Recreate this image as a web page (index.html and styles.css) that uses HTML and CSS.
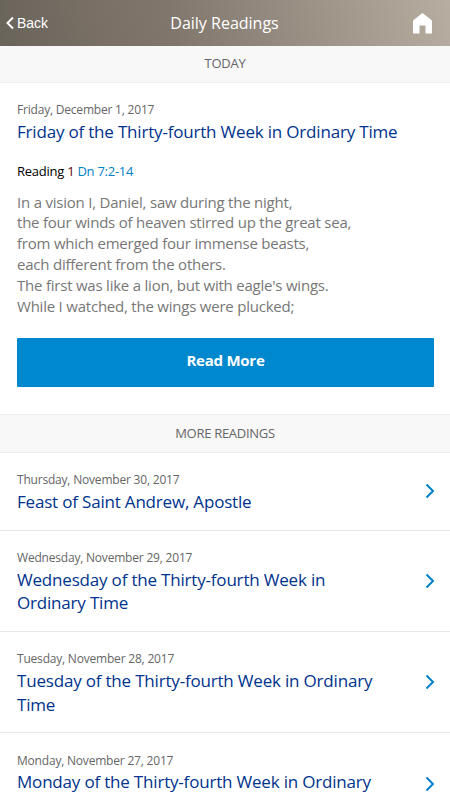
FILE: index.html
```html
<!DOCTYPE html>
<html lang="en">
<head>
<meta charset="utf-8">
<title>Daily Readings</title>
<link rel="stylesheet" href="styles.css">
</head>
<body>
<header class="bar">
  <a class="back"><svg width="8" height="14" viewBox="0 0 8 14"><path d="M7 1.5 1.5 7 7 12.5" fill="none" stroke="#fff" stroke-width="2"/></svg><span>Back</span></a>
  <h1>Daily Readings</h1>
  <a class="home"><svg width="19" height="21" viewBox="0 0 19 21"><path d="M9.5 0 0 7.5V20.5H6.5V12.5H12.5V20.5H19V7.5Z" fill="#fff"/></svg></a>
</header>
<h2 class="section">TODAY</h2>
<article class="today">
  <p class="date">Friday, December 1, 2017</p>
  <h3 class="title">Friday of the Thirty-fourth Week in Ordinary Time</h3>
  <p class="reading">Reading <span class="num">1</span> <a>Dn 7:2-14</a></p>
  <p class="verse">In a vision I, Daniel, saw during the night,<br>the four winds of heaven stirred up the great sea,<br>from which emerged four immense beasts,<br>each different from the others.<br>The first was like a lion, but with eagle's wings.<br>While I watched, the wings were plucked;</p>
  <a class="more">Read More</a>
</article>
<h2 class="section second">MORE READINGS</h2>
<ul class="list">
  <li><div><p class="date">Thursday, November 30, 2017</p><h3 class="title">Feast of Saint Andrew, Apostle</h3></div><svg class="chev" width="10" height="16" viewBox="0 0 10 16"><path d="M1.5 1.5 8 8 1.5 14.5"/></svg></li>
  <li><div><p class="date">Wednesday, November 29, 2017</p><h3 class="title">Wednesday of the Thirty-fourth Week in<br>Ordinary Time</h3></div><svg class="chev" width="10" height="16" viewBox="0 0 10 16"><path d="M1.5 1.5 8 8 1.5 14.5"/></svg></li>
  <li><div><p class="date">Tuesday, November 28, 2017</p><h3 class="title">Tuesday of the Thirty-fourth Week in Ordinary<br>Time</h3></div><svg class="chev" width="10" height="16" viewBox="0 0 10 16"><path d="M1.5 1.5 8 8 1.5 14.5"/></svg></li>
  <li class="last"><div><p class="date">Monday, November 27, 2017</p><h3 class="title">Monday of the Thirty-fourth Week in Ordinary</h3></div><svg class="chev" width="10" height="16" viewBox="0 0 10 16"><path d="M1.5 1.5 8 8 1.5 14.5"/></svg></li>
</ul>
</body>
</html>
```
FILE: styles.css
```css
* { box-sizing: border-box; margin: 0; padding: 0; }
body { height: 800px; overflow: hidden; background: #fff; font-family: "Open Sans", sans-serif; }
.bar { height: 46px; padding: 0 18px 0 6px; display: grid; grid-template-columns: 75px 1fr 64px; align-items: center; color: #fff; background: linear-gradient(75deg, #69645a 0%, #7a7066 24%, #80766c 38%, #b7aea1 100%); }
.back { display: flex; align-items: center; gap: 3px; font: 14px "Liberation Sans", sans-serif; }
.bar h1 { font-size: 16px; font-weight: 400; text-align: center; }
.home { display: flex; justify-content: flex-end; padding-top: 1px; }
.section { height: 37px; line-height: 35px; border-bottom: 1px solid #eee; background: #f8f8f8; color: #666; text-align: center; font-size: 13px; letter-spacing: -0.28px; font-weight: 400; }
.section.second { height: 39px; line-height: 36px; border-top: 1px solid #eee; }
.today { height: 331px; padding: 18px 16px 0 17px; }
.date { font-size: 12px; letter-spacing: -0.2px; line-height: 18px; color: #666; }
.title { margin-top: 0.9px; font-size: 17px; letter-spacing: -0.19px; line-height: 23.6px; font-weight: 400; color: #00338d; }
.today .title { margin-top: 1px; }
.reading { margin-top: 18px; font-size: 13px; letter-spacing: -0.26px; line-height: 18px; color: #000; }
.reading .num { color: #600; }
.reading a { color: #0080c8; }
.verse { margin-top: 12px; font-size: 15px; letter-spacing: -0.22px; line-height: 20.8px; color: #777; }
.more { display: block; margin-top: 21.6px; height: 49px; line-height: 45px; background: #0088ce; color: #fff; font-size: 15px; letter-spacing: -0.25px; font-weight: 700; text-align: center; border-radius: 1px; }
.list { list-style: none; }
.list li { display: flex; align-items: center; justify-content: space-between; padding: 18.1px 15px 16.2px 17px; border-bottom: 1px solid #e8e8e8; }
.list .last { height: 102px; align-items: flex-start; }
.chev { margin-bottom: 2px; fill: none; stroke: #0080c8; stroke-width: 2; }
.last .chev { margin-top: 24.4px; }
```
